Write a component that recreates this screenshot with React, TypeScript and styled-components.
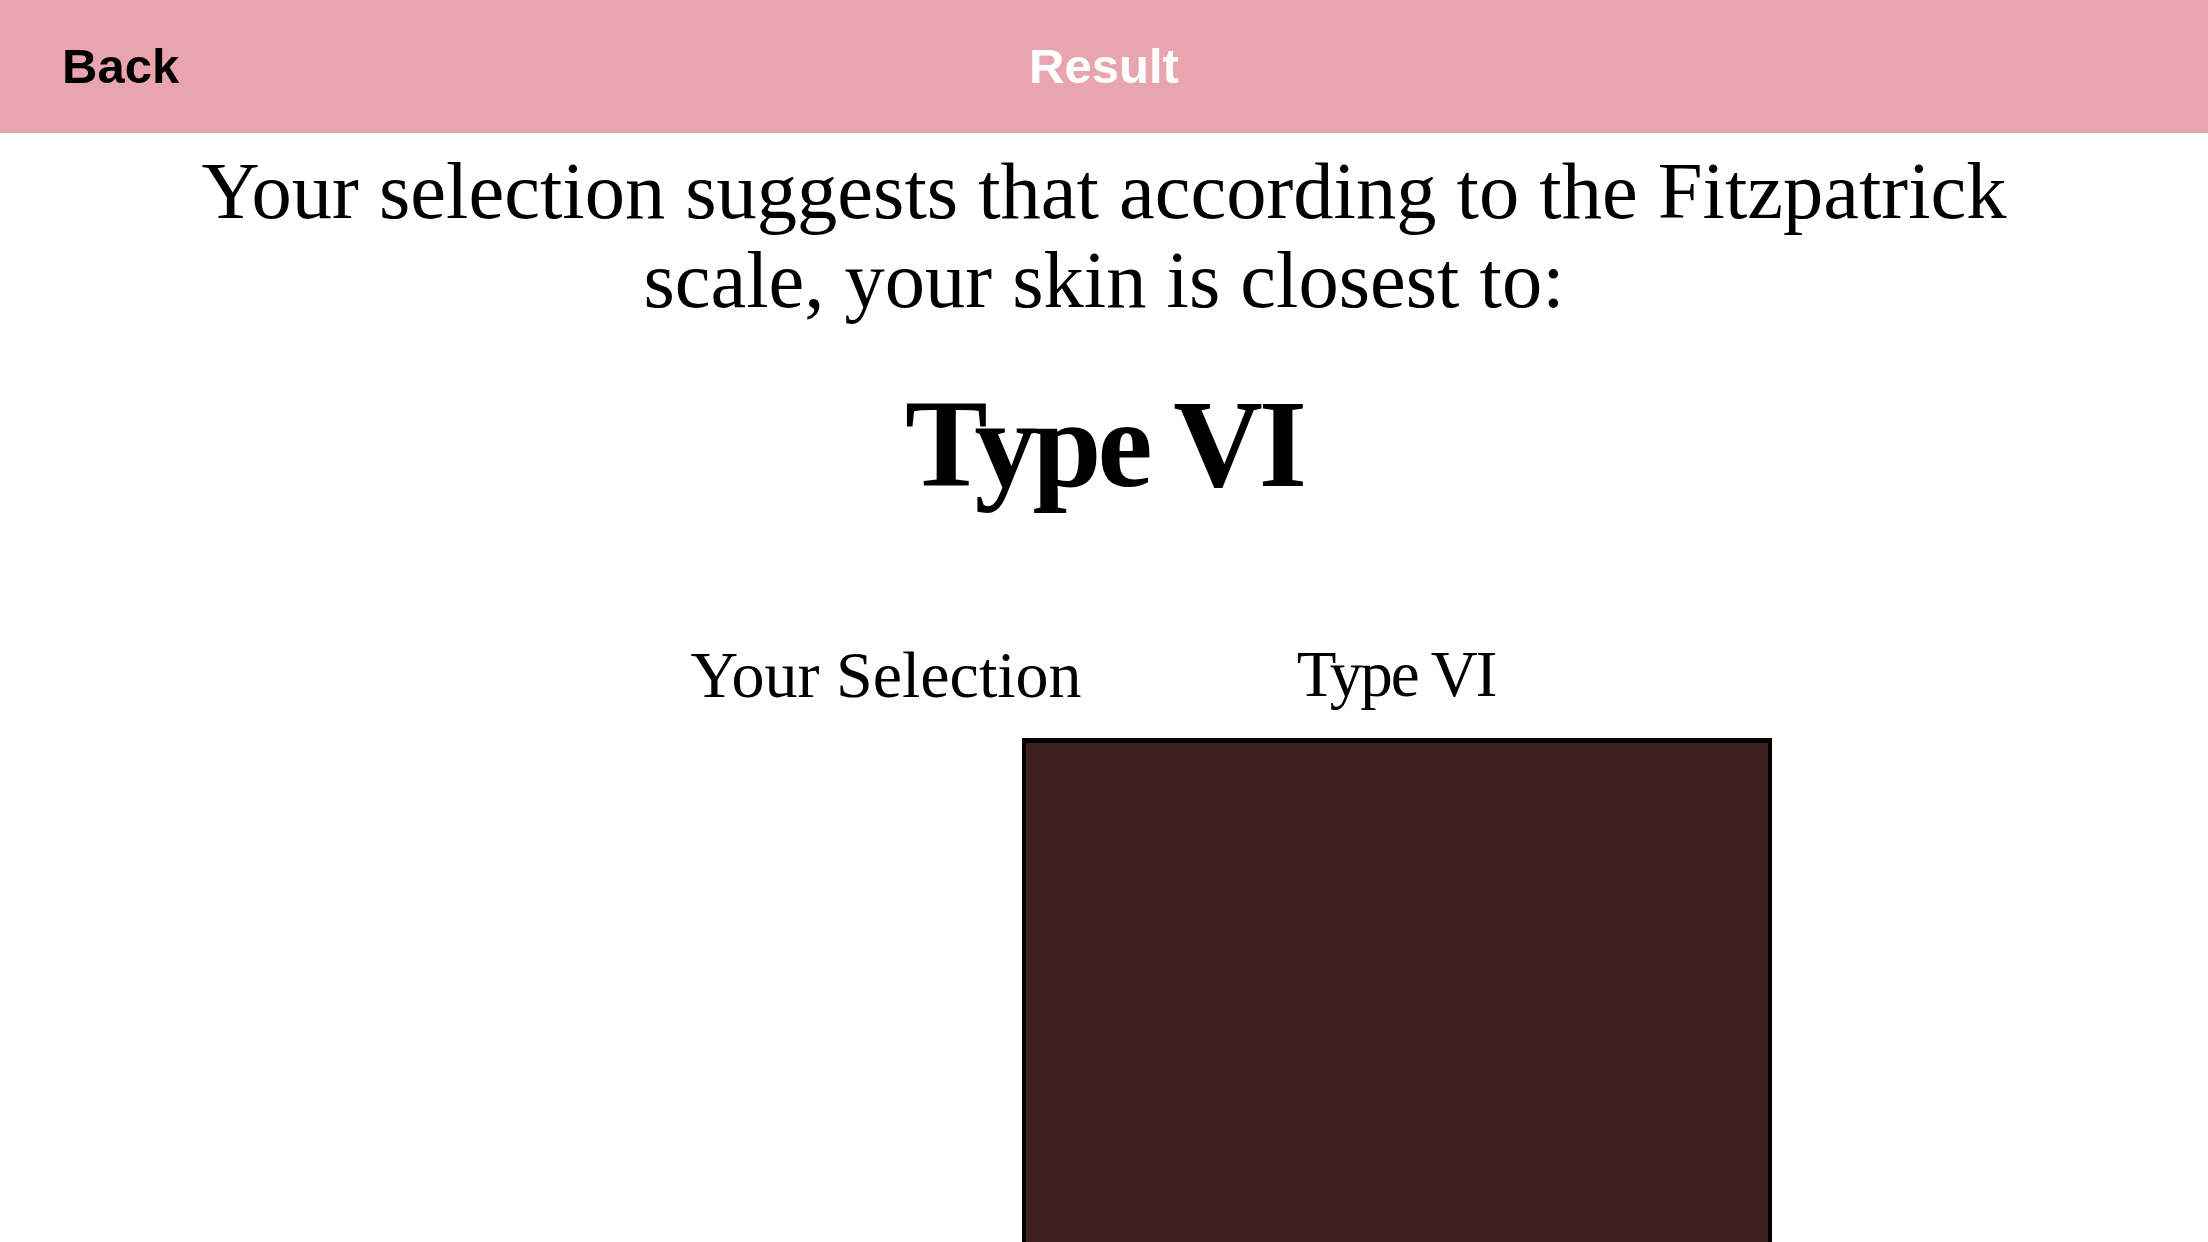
import React from 'react'
import styled, { createGlobalStyle } from 'styled-components'

const GlobalStyle = createGlobalStyle`
  html, body {
    margin: 0;
    padding: 0;
    background: #ffffff;
  }
  body {
    width: 2208px;
    height: 1242px;
    overflow: hidden;
  }
`

const Screen = styled.div`
  width: 2208px;
  height: 1242px;
  display: flex;
  flex-direction: column;
  background: #ffffff;
  overflow: hidden;
`

const NavBar = styled.div`
  height: 132px;
  flex-shrink: 0;
  display: grid;
  grid-template-columns: 1fr auto 1fr;
  align-items: center;
  padding: 0 62px;
  background: #e8a5ae;
  border-bottom: 1px solid #b9b0b2;
  font-family: 'Liberation Sans', Arial, sans-serif;
  font-size: 49px;
  font-weight: 700;
`

const BackButton = styled.button`
  justify-self: start;
  border: 0;
  padding: 0;
  background: none;
  font: inherit;
  color: #000000;
  cursor: pointer;
`

const NavTitle = styled.div`
  color: #ffffff;
`

const Content = styled.div`
  flex: 1;
  display: flex;
  flex-direction: column;
  align-items: center;
  font-family: 'Liberation Serif', 'Times New Roman', serif;
  color: #000000;
`

const Intro = styled.p`
  margin: 13px 0 0;
  font-size: 80.5px;
  line-height: 89px;
  text-align: center;
`

const ResultType = styled.h1`
  margin: 50px 0 0;
  font-size: 124px;
  font-weight: 700;
  letter-spacing: -4px;
  line-height: normal;
`

const LabelRow = styled.div`
  align-self: stretch;
  display: flex;
  justify-content: center;
  padding-left: 74px;
  margin-top: 121px;
`

const Label = styled.div<{ $tight?: boolean }>`
  width: 510px;
  text-align: center;
  font-size: ${(p) => (p.$tight ? '65px' : '66px')};
  line-height: 75px;
  letter-spacing: ${(p) => (p.$tight ? '-2px' : '0')};
`

const SwatchRow = styled.div`
  align-self: stretch;
  flex: 1;
  display: flex;
  padding-left: 272px;
  margin-top: 26px;
`

const Swatch = styled.div<{ $color?: string }>`
  width: 750px;
  box-sizing: border-box;
  background: ${(p) => p.$color || 'transparent'};
  border: ${(p) => (p.$color ? '4px solid #000000' : '0')};
  border-top-width: ${(p) => (p.$color ? '5px' : '0')};
  border-bottom: 0;
`

const App: React.FC = () => {
  return (
    <>
      <GlobalStyle />
      <Screen>
        <NavBar>
          <BackButton>Back</BackButton>
          <NavTitle>Result</NavTitle>
        </NavBar>
        <Content>
          <Intro>
            Your selection suggests that according to the Fitzpatrick
            <br />
            scale, your skin is closest to:
          </Intro>
          <ResultType>Type VI</ResultType>
          <LabelRow>
            <Label>Your Selection</Label>
            <Label $tight>Type VI</Label>
          </LabelRow>
          <SwatchRow>
            <Swatch />
            <Swatch $color="#3c1f1e" />
          </SwatchRow>
        </Content>
      </Screen>
    </>
  )
}

export default App
